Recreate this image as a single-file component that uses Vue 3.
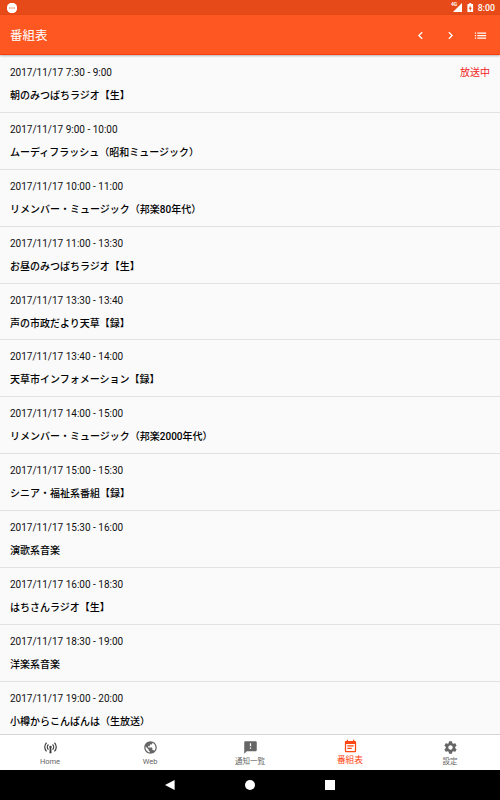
<script setup>
const programs = [
  { time: '2017/11/17 7:30 - 9:00', title: '朝のみつばちラジオ【生】', live: true },
  { time: '2017/11/17 9:00 - 10:00', title: 'ムーディフラッシュ（昭和ミュージック）' },
  { time: '2017/11/17 10:00 - 11:00', title: 'リメンバー・ミュージック（邦楽80年代）' },
  { time: '2017/11/17 11:00 - 13:30', title: 'お昼のみつばちラジオ【生】' },
  { time: '2017/11/17 13:30 - 13:40', title: '声の市政だより天草【録】' },
  { time: '2017/11/17 13:40 - 14:00', title: '天草市インフォメーション【録】' },
  { time: '2017/11/17 14:00 - 15:00', title: 'リメンバー・ミュージック（邦楽2000年代）' },
  { time: '2017/11/17 15:00 - 15:30', title: 'シニア・福祉系番組【録】' },
  { time: '2017/11/17 15:30 - 16:00', title: '演歌系音楽' },
  { time: '2017/11/17 16:00 - 18:30', title: 'はちさんラジオ【生】' },
  { time: '2017/11/17 18:30 - 19:00', title: '洋楽系音楽' },
  { time: '2017/11/17 19:00 - 20:00', title: '小樽からこんばんは（生放送）' },
]

const tabs = [
  { label: 'Home', dark: true, icon: 'M12 9a2 2 0 0 1 1.200 3.600L13.700 21h-3.400l.5-8.400A2 2 0 0 1 12 9zM8 6.400l1.400 1.400a4.800 4.800 0 0 0 0 6.900L8 16.100a6.800 6.800 0 0 1 0-9.700zM16 6.400a6.800 6.800 0 0 1 0 9.700l-1.400-1.400a4.800 4.800 0 0 0 0-6.900zM5 3.700l1.300 1.400a8.800 8.800 0 0 0 0 12.400L5 18.900a10.700 10.700 0 0 1 0-15.200zM19 3.700a10.700 10.700 0 0 1 0 15.200l-1.300-1.400a8.800 8.800 0 0 0 0-12.400z' },
  { label: 'Web', icon: 'M12 2C6.480 2 2 6.480 2 12s4.480 10 10 10 10-4.480 10-10S17.520 2 12 2zm-1 17.930c-3.950-.49-7-3.850-7-7.930 0-.62.08-1.210.21-1.790L9 15v1c0 1.100.9 2 2 2v1.930zm6.900-2.540c-.26-.81-1-1.390-1.900-1.390h-1v-3c0-.55-.45-1-1-1H8v-2h2c.55 0 1-.45 1-1V7h2c1.100 0 2-.9 2-2v-.41c2.930 1.190 5 4.060 5 7.410 0 2.080-.8 3.970-2.100 5.390z' },
  { label: '通知一覧', icon: 'M20 2H4c-1.100 0-1.990.9-1.990 2L2 22l4-4h14c1.100 0 2-.9 2-2V4c0-1.100-.9-2-2-2zm-7 12h-2v-2h2v2zm0-4h-2V5h2v5z' },
  { label: '番組表', active: true, icon: 'M17 10H7v2h10v-2zm2-7h-1V1h-2v2H8V1H6v2H5c-1.110 0-1.990.9-1.990 2L3 19c0 1.100.89 2 2 2h14c1.100 0 2-.9 2-2V5c0-1.100-.9-2-2-2zm0 16H5V8h14v11zm-5-5H7v2h7v-2z' },
  { label: '設定', icon: 'M19.430 12.980c.04-.32.07-.64.07-.98s-.03-.66-.07-.98l2.110-1.650c.19-.15.24-.42.12-.64l-2-3.460c-.12-.22-.39-.3-.61-.22l-2.490 1c-.52-.4-1.080-.73-1.690-.98l-.38-2.650C14.460 2.180 14.250 2 14 2h-4c-.25 0-.46.18-.49.42l-.38 2.650c-.61.25-1.170.59-1.690.98l-2.490-1c-.23-.09-.49 0-.61.22l-2 3.460c-.13.22-.07.49.12.64l2.110 1.650c-.04.32-.07.65-.07.98s.03.66.07.98l-2.110 1.650c-.19.15-.24.42-.12.64l2 3.460c.12.22.39.3.61.22l2.490-1c.52.4 1.080.73 1.690.98l.38 2.650c.03.24.24.42.49.42h4c.25 0 .46-.18.49-.42l.38-2.650c.61-.25 1.170-.59 1.690-.98l2.490 1c.23.09.49 0 .61-.22l2-3.460c.12-.22.07-.49-.12-.64l-2.110-1.650zM12 15.500c-1.930 0-3.500-1.570-3.500-3.500s1.570-3.500 3.500-3.500 3.500 1.570 3.500 3.500-1.570 3.500-3.500 3.500z' },
]
</script>

<template>
  <div class="screen">
    <div class="status">
      <svg class="app-badge" viewBox="0 0 10 10">
        <path d="M3 0h4l2 1.500 1 2v3l-1 2L7 10H3L1 8.500l-1-2v-3l1-2z" fill="#fff" />
        <path d="M2 4.200h1.500v1.500H2zM4.300 4.200h1.400v1.500H4.300zM6.500 4.200H8v1.500H6.500z" fill="#ee9c80" />
      </svg>
      <div class="status-right">
        <span class="net">4G</span>
        <svg class="signal" viewBox="0 0 9 9"><path d="M9 0v9H0z" fill="#fff" /></svg>
        <svg class="battery" viewBox="0 0 6 10">
          <path d="M2 0h2v1h1.300q.7 0 .7.700v7.600q0 .7-.7.700H.7Q0 10 0 9.300V1.700Q0 1 .7 1H2z" fill="#fff" />
          <path d="M3.400 2.500v2.600h1.300L2.600 8.700V6.100H1.300z" fill="#e64a19" />
        </svg>
        <span class="clock">8:00</span>
      </div>
    </div>
    <header class="bar">
      <h1>番組表</h1>
      <div class="actions">
        <svg viewBox="0 0 24 24"><path d="M15.410 7.410L14 6l-6 6 6 6 1.410-1.410L10.830 12z" /></svg>
        <svg viewBox="0 0 24 24"><path d="M10 6L8.590 7.410 13.170 12l-4.580 4.590L10 18l6-6z" /></svg>
        <svg viewBox="0 0 24 24"><path d="M3 13h2v-2H3v2zm0 4h2v-2H3v2zm0-8h2V7H3v2zm4 4h14v-2H7v2zm0 4h14v-2H7v2zM7 7v2h14V7H7z" /></svg>
      </div>
    </header>
    <main class="list">
      <div v-for="p in programs" :key="p.time" class="row">
        <div class="line">
          <span>{{ p.time }}</span>
          <span v-if="p.live" class="live">放送中</span>
        </div>
        <div class="title">{{ p.title }}</div>
      </div>
    </main>
    <nav class="tabs">
      <div v-for="t in tabs" :key="t.label" class="tab" :class="{ active: t.active, dark: t.dark }">
        <svg viewBox="0 0 24 24"><path :d="t.icon" /></svg>
        <span>{{ t.label }}</span>
      </div>
    </nav>
    <div class="system">
      <svg viewBox="0 0 10 10"><path d="M9.600 0v10L0 5z" /></svg>
      <svg viewBox="0 0 10 10"><circle cx="5" cy="5" r="5" /></svg>
      <svg viewBox="0 0 10 10"><path d="M0 0h10v10H0z" /></svg>
    </div>
  </div>
</template>

<style>
body {
  margin: 0;
}
</style>

<style scoped>
.screen {
  display: flex;
  flex-direction: column;
  width: 500px;
  height: 800px;
  overflow: hidden;
  background: #fafafa;
  color: #101010;
  font-family: Roboto, "Noto Sans CJK JP", sans-serif;
  font-size: 10px;
}
.status {
  display: flex;
  flex: none;
  align-items: center;
  justify-content: space-between;
  box-sizing: border-box;
  height: 15px;
  padding: 0 5px 0 7px;
  background: #e64a19;
  color: #fff;
}
.app-badge {
  width: 10px;
  height: 10px;
}
.status-right {
  display: flex;
  align-items: center;
}
.net {
  align-self: flex-start;
  padding-top: 1px;
  font-size: 5px;
  font-weight: 700;
  line-height: 6px;
}
.signal {
  width: 9px;
  height: 9px;
  margin: 0 5px 0 -4px;
}
.battery {
  width: 6.500px;
  height: 9.500px;
  margin-right: 4px;
}
.clock {
  padding-top: 1px;
  font-size: 8.750px;
  font-weight: 500;
  line-height: 15px;
}
.bar {
  display: flex;
  flex: none;
  align-items: center;
  justify-content: space-between;
  box-sizing: border-box;
  height: 40px;
  padding: 1px 12.500px 0 10px;
  border-bottom: 1px solid #f4400c;
  background: #ff5722;
  box-shadow: 0 1px 2px rgba(0, 0, 0, 0.28);
  color: #fff;
  z-index: 1;
}
.bar h1 {
  margin: 0;
  padding-top: 1px;
  font-size: 12.500px;
  font-weight: 400;
  line-height: 18px;
}
.actions {
  display: flex;
  gap: 15px;
}
.actions svg {
  width: 15px;
  height: 15px;
  fill: #fff;
}
.list {
  flex: 1;
  min-height: 0;
  padding-top: 1px;
  overflow: hidden;
}
.row {
  box-sizing: border-box;
  height: 56.880px;
  padding: 9px 10px 0;
  border-bottom: 1px solid #e2e2e2;
}
.line {
  display: flex;
  justify-content: space-between;
  height: 16px;
  line-height: 16px;
}
.live {
  color: #f22222;
}
.title {
  margin-top: 7px;
  font-weight: 500;
  line-height: 16px;
  color: #000;
  white-space: nowrap;
}
.tabs {
  display: flex;
  flex: none;
  box-sizing: border-box;
  height: 36px;
  border-top: 1px solid #d4d4d4;
  background: #fff;
  color: #666;
}
.tab {
  display: flex;
  flex: 1;
  flex-direction: column;
  align-items: center;
  padding-top: 5px;
  font-size: 7.500px;
  line-height: 10px;
}
.tab svg {
  width: 15px;
  height: 15px;
  margin-bottom: 1.500px;
  fill: currentColor;
}
.tab.dark svg {
  fill: #3c3c3c;
}
.tab.active {
  padding-top: 4px;
  color: #ff4713;
  font-size: 8.750px;
}
.tab.active svg {
  margin-bottom: 0.500px;
}
.system {
  display: flex;
  flex: none;
  align-items: center;
  justify-content: center;
  gap: 70px;
  height: 30px;
  background: #000;
}
.system svg {
  width: 10px;
  height: 10px;
  fill: #fff;
}
</style>
